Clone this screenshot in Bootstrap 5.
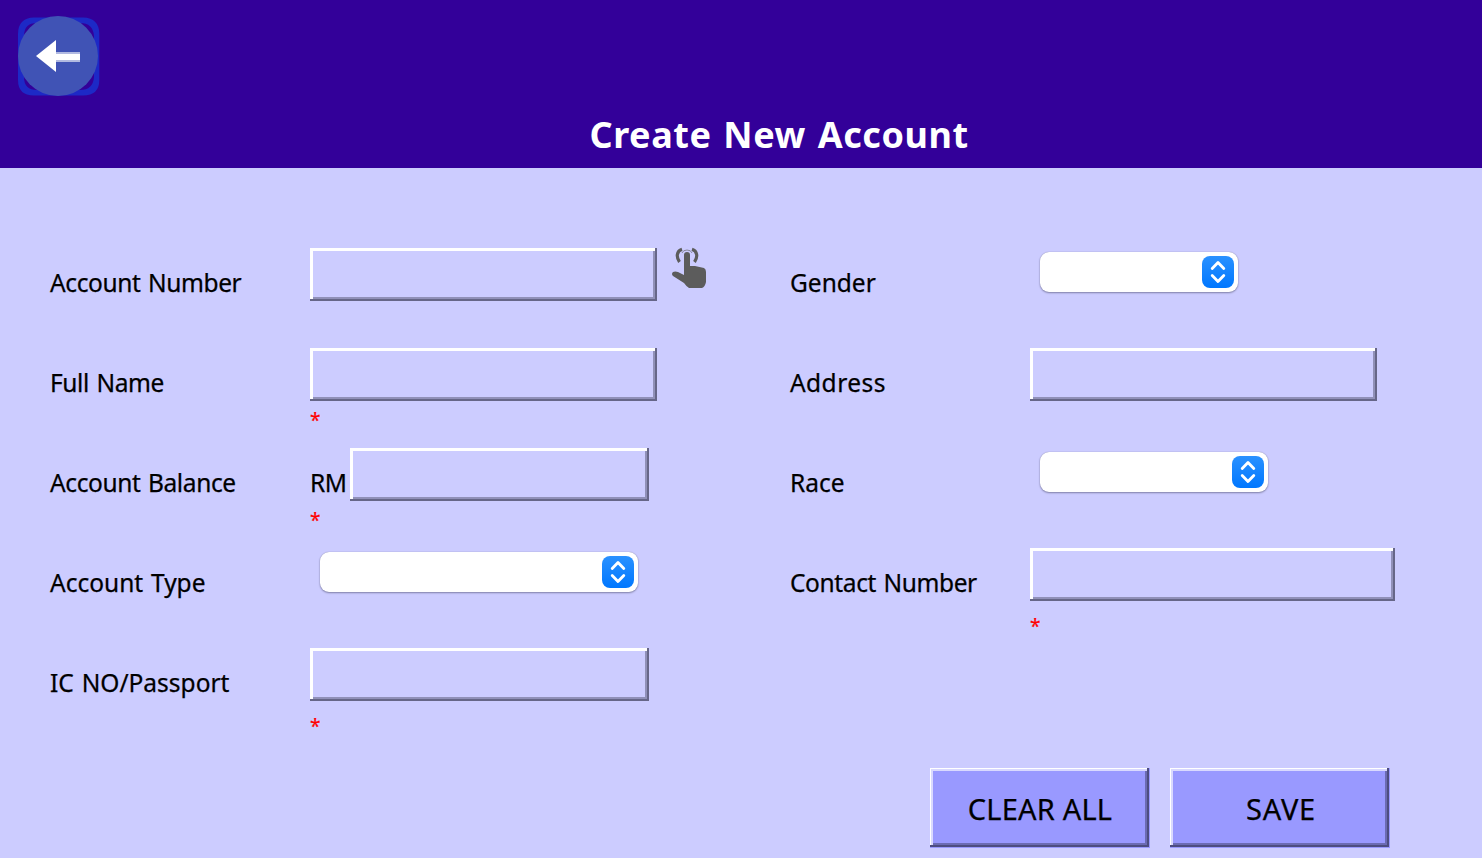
<!DOCTYPE html>
<html lang="en">
<head>
<meta charset="utf-8">
<meta name="viewport" content="width=device-width, initial-scale=1">
<title>Create New Account</title>
<link href="https://cdn.jsdelivr.net/npm/bootstrap@5.3.0/dist/css/bootstrap.min.css" rel="stylesheet">
<style>
body{background:#ccccff;color:#000;font-family:"Noto Sans","Open Sans",sans-serif;width:1482px;height:858px;overflow:hidden}
.top-bar{background:#330099;height:168px;padding:15px 0 0 17px}
.back-btn{width:83px;height:83px;line-height:0}
.page-title{font-size:36px;line-height:40px;font-weight:700;letter-spacing:.55px;word-spacing:2px;margin:17px 0 0 572.5px;white-space:nowrap}
.form-area{padding:80px 0 0 50px}
.side-a{width:740px}
.line{height:100px}
.caption{width:260px;font-size:24.5px;line-height:34px;padding-top:18px;letter-spacing:-.38px;word-spacing:1.5px;white-space:nowrap;-webkit-text-stroke:.25px #000}
.side-b .caption{width:240px}
.caption.loose{letter-spacing:0}
.caption.wide{letter-spacing:.45px}
.side-a .unit{width:40px}
.bevel{display:block;height:53px;border:0;border-radius:0;padding:4px 8px;background:#ccccff;outline:0;font-size:24px;
box-shadow:inset -2px -2px #666688,inset 3px 3px #fff,inset -4px -4px #9090b8}
.w-a{width:347px}.w-b{width:299px}.w-c{width:339px}.w-d{width:365px}
.req{color:#f00;font-size:19px;line-height:24px;height:24px;margin-top:7px;-webkit-text-stroke:.25px #f00}
.req.low{margin-top:13px}
.picker{height:40px;margin:4px 0 0 10px;padding:4px;background:#fff;border:0;border-radius:9px;box-shadow:0 0 1px #8080a8,0 1px 2px #8080a8}
.p-a{width:318px}.p-b{width:198px}.p-c{width:228px}
.knob{width:32px;height:32px;border-radius:8px;background:linear-gradient(#2a91ff,#0077ff);line-height:0}
.actions{padding:20px 92px 0 0;gap:20px}
.push{width:220px;height:80px;border:0;background:#9999ff;color:#000;font-size:29px;line-height:40px;padding:2px 0 0;letter-spacing:.2px;-webkit-text-stroke:.25px #000;
box-shadow:inset -1px -1px #9999ff,inset -3px -3px #4d4d80,inset 1px 1px #fff,inset 3px 3px #d9d9ff,inset -5px -5px #6b6bb3}
.push.short{letter-spacing:.8px;padding-left:2px}
</style>
</head>
<body>
<header class="top-bar text-white">
<button class="back-btn btn p-0 border-0 d-block" aria-label="Back">
<svg width="83" height="83" viewBox="0 0 83 83"><path fill="#1d29c6" fill-rule="evenodd" d="M17 2.500H66Q82.300 3 82.300 19V65Q82.300 80.500 66 80.500H17Q1 80.500 1 65V19Q1 3 17 2.500ZM20 8Q7 8 7 21V62Q7 75 20 75H63Q76 75 77 62V21Q76 8 63 8Z"/><circle cx="41" cy="41" r="40" fill="#4053b5"/><path d="M19 41 39 25V57Z" fill="#fff"/><path d="M39 37H63V47H39Z" fill="#fff" opacity=".6"/><path d="M38 39H63V45H38Z" fill="#fff"/></svg>
</button>
<h1 class="page-title">Create New Account</h1>
</header>
<main class="form-area">
<div class="d-flex">
<section class="side-a">
<div class="line d-flex"><label class="caption" for="acc">Account Number</label><input id="acc" class="bevel w-a">
<svg class="ms-3 overflow-visible" width="36" height="42" viewBox="0 0 36 42" fill="#5c5c5c"><path d="M9 1.300C3.500 3 3 9 6.500 14M19 1.300C24.500 3 25 9 21.500 14" fill="none" stroke="#5c5c5c" stroke-width="3.200"/><path d="M9 5Q10 2 14 2T19 5" fill="none" stroke="#5c5c5c" stroke-width="1" opacity=".6"/><path d="M11 7Q11 4 14 4T17 7V18H22L31 20Q33 21 33 24V34Q32 39 29 40H16Q13 38 11 35L0 28Q-2 26 0 24Q2 23 5 24L11 27Z"/></svg>
</div>
<div class="line d-flex"><label class="caption" for="name">Full Name</label><div><input id="name" class="bevel w-a"><div class="req">*</div></div></div>
<div class="line d-flex"><label class="caption" for="bal">Account Balance</label><div><div class="d-flex"><span class="caption unit">RM</span><input id="bal" class="bevel w-b"></div><div class="req">*</div></div></div>
<div class="line d-flex"><span class="caption loose">Account Type</span><button class="picker p-a d-flex justify-content-end" aria-label="Account Type"><span class="knob"><svg width="32" height="32" fill="none" stroke="#fff" stroke-width="2.800" stroke-linecap="round" stroke-linejoin="round"><path d="M10.200 12.500 16 6.500l5.800 6M10.200 19.500 16 25.500l5.800-6"/></svg></span></button></div>
<div class="line d-flex"><label class="caption loose" for="ic">IC NO/Passport</label><div><input id="ic" class="bevel w-c"><div class="req low">*</div></div></div>
</section>
<section class="side-b">
<div class="line d-flex"><span class="caption loose">Gender</span><button class="picker p-b d-flex justify-content-end" aria-label="Gender"><span class="knob"><svg width="32" height="32" fill="none" stroke="#fff" stroke-width="2.800" stroke-linecap="round" stroke-linejoin="round"><path d="M10.200 12.500 16 6.500l5.800 6M10.200 19.500 16 25.500l5.800-6"/></svg></span></button></div>
<div class="line d-flex"><label class="caption wide" for="addr">Address</label><input id="addr" class="bevel w-a"></div>
<div class="line d-flex"><span class="caption loose">Race</span><button class="picker p-c d-flex justify-content-end" aria-label="Race"><span class="knob"><svg width="32" height="32" fill="none" stroke="#fff" stroke-width="2.800" stroke-linecap="round" stroke-linejoin="round"><path d="M10.200 12.500 16 6.500l5.800 6M10.200 19.500 16 25.500l5.800-6"/></svg></span></button></div>
<div class="line d-flex"><label class="caption" for="tel">Contact Number</label><div><input id="tel" class="bevel w-d"><div class="req low">*</div></div></div>
</section>
</div>
<div class="actions d-flex justify-content-end"><button class="push">CLEAR ALL</button><button class="push short">SAVE</button></div>
</main>
<script src="https://cdn.jsdelivr.net/npm/bootstrap@5.3.0/dist/js/bootstrap.bundle.min.js"></script>
</body>
</html>
